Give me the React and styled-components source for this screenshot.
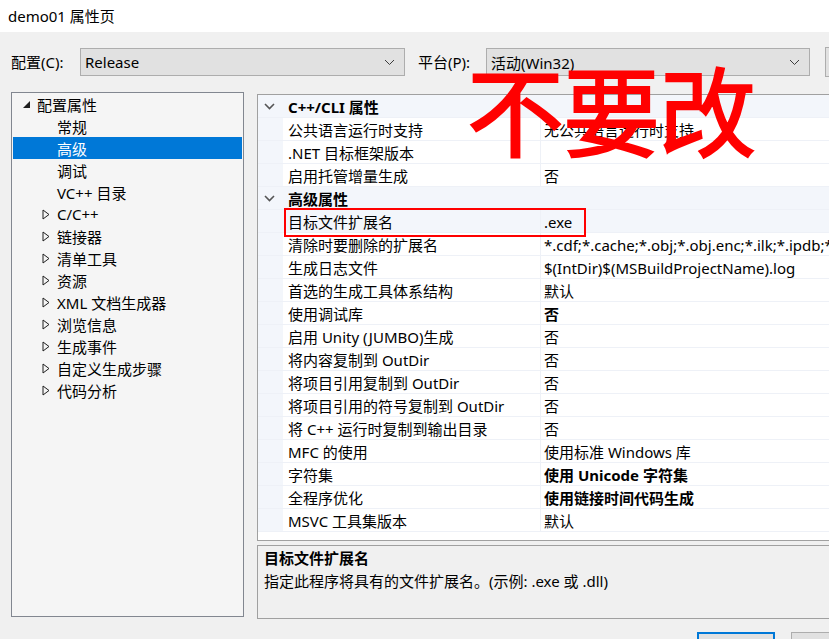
import React from "react";
import styled, { createGlobalStyle } from "styled-components";

const FONT = `"Noto Sans", "Noto Sans CJK SC", sans-serif`;

const Global = createGlobalStyle`
  html, body { margin: 0; padding: 0; background: #f0f0f0; }
  body { font-family: ${FONT}; font-size: 15px; color: #000; overflow: hidden; }
`;

const Page = styled.div`
  position: relative;
  width: 829px;
  height: 639px;
  overflow: hidden;
  background: #f0f0f0;
`;

const TitleBar = styled.div`
  height: 32px;
  background: #ffffff;
  display: flex;
  align-items: center;
  padding-left: 8px;
  padding-bottom: 2px;
  box-sizing: border-box;
  font-size: 15px;
  color: #000;
`;

const Main = styled.div`
  width: 1000px;
  padding: 16px 0 0 0;
`;

const ConfigRow = styled.div`
  display: flex;
  align-items: center;
  height: 28px;
`;

const Label = styled.div`
  flex: none;
  width: ${(p) => p.$w}px;
  padding-left: ${(p) => p.$pl || 0}px;
  box-sizing: border-box;
  font-size: 15px;
  line-height: 28px;
  color: #000;
`;

const Select = styled.div`
  flex: none;
  width: ${(p) => p.$w}px;
  height: 28px;
  box-sizing: border-box;
  background: #e1e1e1;
  border: 1px solid #adadad;
  display: flex;
  align-items: center;
  justify-content: space-between;
  padding: 0 9px 0 4px;
  margin-right: ${(p) => p.$mr || 0}px;
  font-size: 15px;
`;

const SideButton = styled.div`
  flex: none;
  width: 120px;
  height: 30px;
  box-sizing: border-box;
  background: #e1e1e1;
  border: 1px solid #adadad;
`;

const Body = styled.div`
  display: flex;
  align-items: flex-start;
  margin-top: 16px;
  padding-left: 11px;
`;

const Tree = styled.div`
  flex: none;
  width: 233px;
  height: 525px;
  box-sizing: border-box;
  border: 1px solid #828790;
  background: #f5f5f5;
  padding: 0 1px;
  margin-right: 13px;
`;

const TreeRow = styled.div`
  height: 22px;
  display: flex;
  align-items: center;
  padding-left: ${(p) => 5 + p.$level * 20}px;
  background: ${(p) => (p.$selected ? "#0078d7" : "transparent")};
  color: ${(p) => (p.$selected ? "#ffffff" : "#000000")};
  font-size: 15px;
  white-space: nowrap;
`;

const Twisty = styled.span`
  width: 16px;
  height: 22px;
  display: inline-flex;
  align-items: center;
  justify-content: center;
  margin-right: 3px;
  flex: none;
`;

const RightCol = styled.div`
  flex: none;
  width: 620px;
  margin-top: 2px;
  display: flex;
  flex-direction: column;
`;

const GridBox = styled.div`
  position: relative;
  height: 447px;
  box-sizing: border-box;
  border: 1px solid #a0a0a0;
  background: #ffffff;
`;

const Row = styled.div`
  display: flex;
  height: 23px;
  box-sizing: border-box;
  border-bottom: 1px solid #eef1f7;
  background: ${(p) => (p.$cat ? "#f3f6fb" : "#ffffff")};
`;

const Gutter = styled.div`
  width: 25px;
  flex: none;
  background: #f3f6fb;
  display: flex;
  align-items: center;
  justify-content: center;
  padding-right: 2px;
  box-sizing: border-box;
`;

const CatText = styled.div`
  font-weight: 700;
  padding: 2px 0 0 5px;
  line-height: 20px;
  font-size: 15px;
`;

const NameCell = styled.div`
  width: 258px;
  flex: none;
  box-sizing: border-box;
  border-right: 1px solid #eef1f7;
  padding: 2px 0 0 5px;
  line-height: 20px;
  white-space: nowrap;
  overflow: hidden;
  background: ${(p) => (p.$sel ? "#f3f6fb" : "transparent")};
`;

const ValueCell = styled.div`
  flex: 1;
  padding: 2px 0 0 3px;
  line-height: 20px;
  white-space: nowrap;
  overflow: hidden;
  font-weight: ${(p) => (p.$bold ? 700 : 400)};
  background: ${(p) => (p.$sel ? "#f3f6fb" : "transparent")};
`;

const RedBox = styled.div`
  position: absolute;
  left: 26px;
  top: 113px;
  width: 302px;
  height: 29px;
  box-sizing: border-box;
  border: 2px solid #ff0000;
  pointer-events: none;
`;

const Desc = styled.div`
  margin-top: 4px;
  height: 74px;
  box-sizing: border-box;
  border: 1px solid #a0a0a0;
  background: #f0f0f0;
  padding: 1px 6px;
`;

const DescTitle = styled.div`
  font-weight: 700;
  line-height: 22px;
`;

const DescText = styled.div`
  line-height: 24px;
`;

const ButtonRow = styled.div`
  display: flex;
  margin-top: 13px;
  padding-left: 440px;
  gap: 16px;
`;

const Btn = styled.div`
  width: 78px;
  height: 24px;
  box-sizing: border-box;
  background: #e1e1e1;
  border: ${(p) => (p.$primary ? "2px solid #0078d7" : "1px solid #adadad")};
`;

const Stamp = styled.div`
  position: absolute;
  left: 467px;
  top: 58px;
  font-family: "Noto Sans CJK SC", sans-serif;
  font-weight: 400;
  font-size: 97px;
  line-height: 1;
  color: #ff0000;
  letter-spacing: -1px;
  white-space: nowrap;
  pointer-events: none;
  -webkit-text-stroke: 2px #ff0000;
`;

const Chevron = () => (
  <svg width="11" height="7" viewBox="0 0 11 7">
    <polyline points="1,1 5.5,5.5 10,1" fill="none" stroke="#3c3c3c" strokeWidth="1" />
  </svg>
);

const CatChevron = () => (
  <svg width="11" height="7" viewBox="0 0 11 7">
    <polyline points="1,1 5.5,5.5 10,1" fill="none" stroke="#555" strokeWidth="1.6" />
  </svg>
);

const Expanded = () => (
  <svg width="9" height="9" viewBox="0 0 9 9">
    <polygon points="8,1 8,8 1,8" fill="#1e1e1e" />
  </svg>
);

const Collapsed = () => (
  <svg width="8" height="11" viewBox="0 0 8 11">
    <polygon points="1,1 7,5.5 1,10" fill="none" stroke="#1e1e1e" strokeWidth="1" />
  </svg>
);

const treeItems = [
  { label: "配置属性", level: 0, icon: "open" },
  { label: "常规", level: 1 },
  { label: "高级", level: 1, selected: true },
  { label: "调试", level: 1 },
  { label: "VC++ 目录", level: 1 },
  { label: "C/C++", level: 1, icon: "closed" },
  { label: "链接器", level: 1, icon: "closed" },
  { label: "清单工具", level: 1, icon: "closed" },
  { label: "资源", level: 1, icon: "closed" },
  { label: "XML 文档生成器", level: 1, icon: "closed" },
  { label: "浏览信息", level: 1, icon: "closed" },
  { label: "生成事件", level: 1, icon: "closed" },
  { label: "自定义生成步骤", level: 1, icon: "closed" },
  { label: "代码分析", level: 1, icon: "closed" },
];

const groups = [
  {
    title: "C++/CLI 属性",
    rows: [
      { name: "公共语言运行时支持", value: "无公共语言运行时支持" },
      { name: ".NET 目标框架版本", value: "" },
      { name: "启用托管增量生成", value: "否" },
    ],
  },
  {
    title: "高级属性",
    rows: [
      { name: "目标文件扩展名", value: ".exe", sel: true },
      {
        name: "清除时要删除的扩展名",
        value:
          "*.cdf;*.cache;*.obj;*.obj.enc;*.ilk;*.ipdb;*.iobj;*.resources;*.tlb;*.tli;*.tlh;*.tmp;*.rsp;*.pgc;*.pgd;*.meta;*.tlog",
      },
      { name: "生成日志文件", value: "$(IntDir)$(MSBuildProjectName).log" },
      { name: "首选的生成工具体系结构", value: "默认" },
      { name: "使用调试库", value: "否", bold: true },
      { name: "启用 Unity (JUMBO)生成", value: "否" },
      { name: "将内容复制到 OutDir", value: "否" },
      { name: "将项目引用复制到 OutDir", value: "否" },
      { name: "将项目引用的符号复制到 OutDir", value: "否" },
      { name: "将 C++ 运行时复制到输出目录", value: "否" },
      { name: "MFC 的使用", value: "使用标准 Windows 库" },
      { name: "字符集", value: "使用 Unicode 字符集", bold: true },
      { name: "全程序优化", value: "使用链接时间代码生成", bold: true },
      { name: "MSVC 工具集版本", value: "默认" },
    ],
  },
];

export default function App() {
  return (
    <Page>
      <Global />
      <TitleBar>demo01 属性页</TitleBar>
      <Main>
        <ConfigRow>
          <Label $w={80} $pl={11}>配置(C):</Label>
          <Select $w={325}>
            <span>Release</span>
            <Chevron />
          </Select>
          <Label $w={81} $pl={13}>平台(P):</Label>
          <Select $w={324} $mr={15}>
            <span>活动(Win32)</span>
            <Chevron />
          </Select>
          <SideButton />
        </ConfigRow>
        <Body>
          <Tree>
            {treeItems.map((t) => (
              <TreeRow key={t.label} $level={t.level} $selected={t.selected}>
                <Twisty>
                  {t.icon === "open" && <Expanded />}
                  {t.icon === "closed" && <Collapsed />}
                </Twisty>
                {t.label}
              </TreeRow>
            ))}
          </Tree>
          <RightCol>
            <GridBox>
              {groups.map((g) => (
                <React.Fragment key={g.title}>
                  <Row $cat>
                    <Gutter>
                      <CatChevron />
                    </Gutter>
                    <CatText>{g.title}</CatText>
                  </Row>
                  {g.rows.map((r) => (
                    <Row key={r.name}>
                      <Gutter />
                      <NameCell $sel={r.sel}>{r.name}</NameCell>
                      <ValueCell $bold={r.bold} $sel={r.sel}>
                        {r.value}
                      </ValueCell>
                    </Row>
                  ))}
                </React.Fragment>
              ))}
              <RedBox />
            </GridBox>
            <Desc>
              <DescTitle>目标文件扩展名</DescTitle>
              <DescText>指定此程序将具有的文件扩展名。(示例: .exe 或 .dll)</DescText>
            </Desc>
            <ButtonRow>
              <Btn $primary />
              <Btn />
            </ButtonRow>
          </RightCol>
        </Body>
      </Main>
      <Stamp>不要改</Stamp>
    </Page>
  );
}
